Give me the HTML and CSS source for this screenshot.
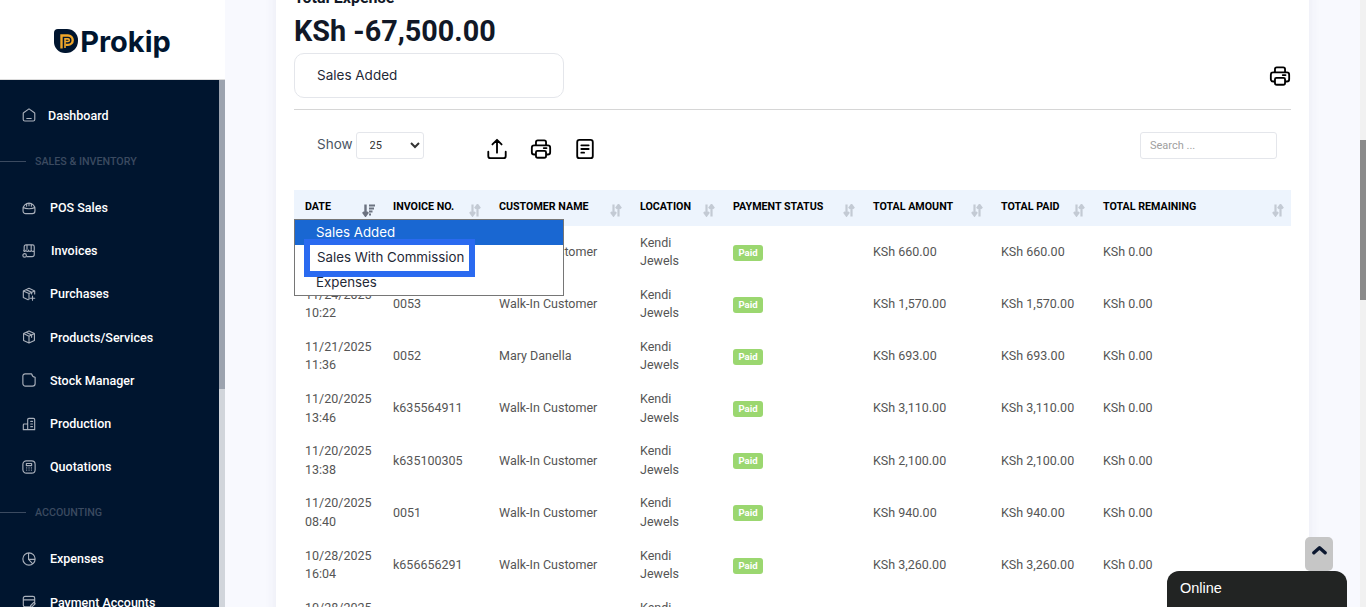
FILE: index.html
```html
<!DOCTYPE html>
<html>
    <head>
        <meta charset="utf-8">
        <title>Prokip - Sales</title>
        <link rel="stylesheet" href="styles.css">
    </head>
    <body>
        <svg class="defs" width="0" height="0">
            <symbol id="sort" viewBox="0 0 12 13">
                <path d="M3.500 0.500v10M1 8l2.500 3.500L6 8M8.500 12.500V2M6 4.500L8.500 1l2.500 3.500" fill="none" stroke="currentColor" stroke-width="2.200"/>
            </symbol>
            <symbol id="sort-down" viewBox="0 0 13 13">
                <path d="M3.500 0.500v10M1 8l2.500 3.500L6 8" fill="none" stroke="currentColor" stroke-width="2.400"/>
                <path d="M7 1.500h6M7 4.500h5M7 7.500h3.500M7 10.500h2" fill="none" stroke="currentColor" stroke-width="2"/>
            </symbol>
            <symbol id="printer" viewBox="0 0 24 24">
                <path d="M6.500 8V4.500A2 2 0 0 1 8.500 2.500h7a2 2 0 0 1 2 2V8M6.500 18H4.500a2.500 2.500 0 0 1-2.500-2.500v-5A2.500 2.500 0 0 1 4.500 8h15a2.500 2.500 0 0 1 2.500 2.500v5a2.500 2.500 0 0 1-2.500 2.500h-2M8 14h8a1.500 1.500 0 0 1 1.500 1.500v4a2 2 0 0 1-2 2h-7a2 2 0 0 1-2-2v-4A1.500 1.500 0 0 1 8 14zM15 11h3" fill="none" stroke="currentColor" stroke-width="2" stroke-linecap="round"/>
            </symbol>
        </svg>
        <div class="shell">
            <aside class="sidebar">
                <div class="brand">
                    <svg class="brand-mark" viewBox="0 0 24 24">
                        <path d="M4 0h9a11 11 0 0 1 11 11v1a12 12 0 0 1-12 12h-1A11 11 0 0 1 0 13V4a4 4 0 0 1 4-4z" fill="#00152f"/>
                        <path d="M7.500 19.500V6.500h6.500a4.700 4.700 0 0 1 0 9.400h-2.500" fill="none" stroke="#f0a72a" stroke-width="2.400"/>
                        <path d="M11.500 12.500h2.500a1.300 1.300 0 0 0 0-2.600h-3v9" fill="none" stroke="#f0a72a" stroke-width="1.600"/>
                    </svg>
                    <span class="brand-name">Prokip</span>
                </div>
                <div class="nav-wrap">
                    <nav class="nav">
                        <a class="nav-item first">
                            <svg class="nav-icon" viewBox="0 0 16 16"><path d="M8 1L1.800 5.500a1 1 0 0 0-.4.800v6.700a1.800 1.800 0 0 0 1.800 1.800h9.600a1.800 1.800 0 0 0 1.800-1.800V6.300a1 1 0 0 0-.4-.8zM5.500 12h5"/></svg>
                            Dashboard
                        </a>
                        <div class="nav-section"><span class="rule"></span>SALES &amp; INVENTORY</div>
                        <a class="nav-item">
                            <svg class="nav-icon" viewBox="0 0 16 16"><path d="M1.200 9A6.800 6.500 0 0 1 14.800 9v2.500a3 3 0 0 1-3 3H4.200a3 3 0 0 1-3-3zM1.500 7.500c2.500 1.800 10.500 1.800 13 0M5.300 4v2M8 3v2.500M10.700 4v2"/></svg>
                            POS Sales
                        </a>
                        <a class="nav-item">
                            <svg class="nav-icon" viewBox="0 0 16 16"><path d="M2.500 7V3a2 2 0 0 1 2-2h7.500a2 2 0 0 1 2 2v4c0 2-3 2-3.500 0 0 2-3 2-3 0 0 2-3 2-3 0-.5 2-2.500 2-2.500 0zM5.700 1.500V6M10.500 1.500V6M14 8v4a2.500 2.500 0 0 1-2.500 2.500H6M1 13a2 2 0 1 0 4 0a2 2 0 1 0-4 0"/></svg>
                            <span class="shift">Invoices</span>
                        </a>
                        <a class="nav-item">
                            <svg class="nav-icon" viewBox="0 0 16 16"><path d="M7 14.500L1.500 12V4.500L8 1.500l6.500 3V8M1.500 4.500L8 7.500l6.500-3M8 7.500V14M4.500 3l6.500 3v2M12 10.500v4.500M9.500 12.800h5"/></svg>
                            Purchases
                        </a>
                        <a class="nav-item">
                            <svg class="nav-icon" viewBox="0 0 16 16"><path d="M8 1.200l6.200 2.900v7.800L8 14.800l-6.200-2.900V4.100zM1.800 4.100L8 7.200l6.200-3.100M8 7.200v7.600M4.800 2.700L11 5.800v2.600"/></svg>
                            Products/Services
                        </a>
                        <a class="nav-item">
                            <svg class="nav-icon" viewBox="0 0 16 16"><path d="M3.500 1h7.500c.5 2.500 1.500 3.500 4 3.800v7.200a3 3 0 0 1-3 3H4a3 3 0 0 1-3-3V3.500A2.500 2.500 0 0 1 3.500 1z"/></svg>
                            Stock Manager
                        </a>
                        <a class="nav-item">
                            <svg class="nav-icon" viewBox="0 0 16 16"><path d="M6.500 14.500V3a1.500 1.500 0 0 1 1.500-1.500h5A1.500 1.500 0 0 1 14.500 3v11.500zM6.500 8H2.500a1 1 0 0 0-1 1v5.500h5M10 5h2M10 8h2M10 11h2"/></svg>
                            Production
                        </a>
                        <a class="nav-item">
                            <svg class="nav-icon" viewBox="0 0 16 16"><path d="M5 1h6a4 4 0 0 1 4 4v6a4 4 0 0 1-4 4H5a4 4 0 0 1-4-4V5a4 4 0 0 1 4-4zM5 4h6v2.500H5zM5.300 9h.1M8 9h.1M10.700 9h.1M5.300 11.500h.1M8 11.500h.1M10.700 11.500h.1"/></svg>
                            Quotations
                        </a>
                        <div class="nav-section"><span class="rule"></span>ACCOUNTING</div>
                        <a class="nav-item">
                            <svg class="nav-icon" viewBox="0 0 16 16"><path d="M1 8a7 7 0 1 0 14 0a7 7 0 1 0-14 0M7.500 1.500V8.500h7M7.500 8.500l4.500 4.700"/></svg>
                            Expenses
                        </a>
                        <a class="nav-item">
                            <svg class="nav-icon" viewBox="0 0 16 16"><path d="M9 13.500H3.500a2 2 0 0 1-2-2v-8a2 2 0 0 1 2-2h9a2 2 0 0 1 2 2v5M1.500 5.500h13M9.500 14l.5-2 3.500-3.500 1.500 1.500-3.500 3.500z"/></svg>
                            Payment Accounts
                        </a>
                    </nav>
                    <div class="nav-scroll"><div class="nav-thumb"></div></div>
                </div>
            </aside>

            <main class="main">
                <section class="card">
                    <h4 class="total-label">Total Expense</h4>
                    <h2 class="total-value">KSh -67,500.00</h2>
                    <div class="filter-row">
                        <div class="filter-box">Sales Added</div>
                        <svg class="icon-btn"><use href="#printer"/></svg>
                    </div>
                    <hr class="divider">
                    <div class="toolbar">
                        <label class="show-label">Show</label>
                        <select class="show-select"><option>25</option><option>50</option><option>100</option></select>
                        <div class="tools">
                            <svg class="icon-btn" viewBox="0 0 24 24"><path d="M12 16V2.500M7 7l5-5 5 5M2.500 15v4.500A2.500 2.500 0 0 0 5 22h14a2.500 2.500 0 0 0 2.500-2.500V15" fill="none" stroke="currentColor" stroke-width="2" stroke-linecap="round" stroke-linejoin="round"/></svg>
                            <svg class="icon-btn"><use href="#printer"/></svg>
                            <svg class="icon-btn" viewBox="0 0 24 24"><path d="M6 2h12a2.500 2.500 0 0 1 2.500 2.500v15A2.500 2.500 0 0 1 18 22H6a2.500 2.500 0 0 1-2.500-2.500v-15A2.500 2.500 0 0 1 6 2zM8 8h8M8 12h8M8 16h3" fill="none" stroke="currentColor" stroke-width="2" stroke-linecap="round"/></svg>
                        </div>
                        <input class="search" placeholder="Search ...">
                    </div>
                    <div class="table-wrap">
                        <table class="sales">
                            <colgroup>
                                <col class="c-date"><col class="c-inv"><col class="c-cust"><col class="c-loc"><col class="c-status"><col class="c-amount"><col class="c-paid"><col class="c-rem">
                            </colgroup>
                            <thead>
                                <tr>
                                    <th><div class="th-in">DATE<svg class="sort active"><use href="#sort-down"/></svg></div></th>
                                    <th><div class="th-in">INVOICE NO.<svg class="sort"><use href="#sort"/></svg></div></th>
                                    <th><div class="th-in">CUSTOMER NAME<svg class="sort"><use href="#sort"/></svg></div></th>
                                    <th><div class="th-in">LOCATION<svg class="sort"><use href="#sort"/></svg></div></th>
                                    <th><div class="th-in">PAYMENT STATUS<svg class="sort"><use href="#sort"/></svg></div></th>
                                    <th><div class="th-in">TOTAL AMOUNT<svg class="sort"><use href="#sort"/></svg></div></th>
                                    <th><div class="th-in">TOTAL PAID<svg class="sort"><use href="#sort"/></svg></div></th>
                                    <th><div class="th-in">TOTAL REMAINING<svg class="sort"><use href="#sort"/></svg></div></th>
                                </tr>
                            </thead>
                            <tbody>
                                <tr><td>11/24/2025<br>12:05</td><td>0054</td><td>Walk-In Customer</td><td>Kendi<br>Jewels</td><td><span class="paid">Paid</span></td><td>KSh 660.00</td><td>KSh 660.00</td><td>KSh 0.00</td></tr>
                                <tr><td>11/24/2025<br>10:22</td><td>0053</td><td>Walk-In Customer</td><td>Kendi<br>Jewels</td><td><span class="paid">Paid</span></td><td>KSh 1,570.00</td><td>KSh 1,570.00</td><td>KSh 0.00</td></tr>
                                <tr><td>11/21/2025<br>11:36</td><td>0052</td><td>Mary Danella</td><td>Kendi<br>Jewels</td><td><span class="paid">Paid</span></td><td>KSh 693.00</td><td>KSh 693.00</td><td>KSh 0.00</td></tr>
                                <tr><td>11/20/2025<br>13:46</td><td>k635564911</td><td>Walk-In Customer</td><td>Kendi<br>Jewels</td><td><span class="paid">Paid</span></td><td>KSh 3,110.00</td><td>KSh 3,110.00</td><td>KSh 0.00</td></tr>
                                <tr><td>11/20/2025<br>13:38</td><td>k635100305</td><td>Walk-In Customer</td><td>Kendi<br>Jewels</td><td><span class="paid">Paid</span></td><td>KSh 2,100.00</td><td>KSh 2,100.00</td><td>KSh 0.00</td></tr>
                                <tr><td>11/20/2025<br>08:40</td><td>0051</td><td>Walk-In Customer</td><td>Kendi<br>Jewels</td><td><span class="paid">Paid</span></td><td>KSh 940.00</td><td>KSh 940.00</td><td>KSh 0.00</td></tr>
                                <tr><td>10/28/2025<br>16:04</td><td>k656656291</td><td>Walk-In Customer</td><td>Kendi<br>Jewels</td><td><span class="paid">Paid</span></td><td>KSh 3,260.00</td><td>KSh 3,260.00</td><td>KSh 0.00</td></tr>
                                <tr><td>10/28/2025<br>12:10</td><td>0050</td><td>Walk-In Customer</td><td>Kendi<br>Jewels</td><td><span class="paid">Paid</span></td><td>KSh 1,200.00</td><td>KSh 1,200.00</td><td>KSh 0.00</td></tr>
                            </tbody>
                        </table>
                        <ul class="dropdown">
                            <li class="opt selected">Sales Added</li>
                            <li class="opt focused">Sales With Commission</li>
                            <li class="opt">Expenses</li>
                        </ul>
                    </div>
                </section>
            </main>
            <div class="page-scroll"><div class="page-thumb"></div></div>
        </div>
        <div class="to-top"><svg viewBox="0 0 16 10"><path d="M2 8l6-5.500L14 8" fill="none" stroke="#0c1830" stroke-width="3.600" stroke-linecap="round" stroke-linejoin="round"/></svg></div>
        <div class="chat">Online</div>
    </body>
</html>
```
FILE: styles.css
```css
html, body {
    margin: 0;
    height: 100%;
    overflow: hidden;
}
body {
    font-family: "Roboto", "Liberation Sans", sans-serif;
    background-color: #f8f9fe;
}
.defs {
    display: block;
    height: 0;
}
.shell {
    display: flex;
    height: 607px;
    overflow: hidden;
}

/* sidebar */
.sidebar {
    width: 225px;
    flex: none;
    display: flex;
    flex-direction: column;
    background-color: white;
}
.brand {
    height: 76px;
    padding-top: 3px;
    border-bottom: 1px solid #dcdcdc;
    display: flex;
    align-items: center;
    justify-content: center;
    gap: 2px;
}
.brand-mark {
    width: 24px;
    height: 24px;
}
.brand-name {
    font-family: "Inter", "Liberation Sans", sans-serif;
    font-weight: 700;
    font-size: 29px;
    color: #00152f;
}
.nav-wrap {
    flex: 1;
    display: flex;
    min-height: 0;
}
.nav {
    flex: 1;
    background-color: #00152f;
    padding-top: 13.800px;
    overflow: hidden;
}
.nav-scroll {
    width: 6px;
    background-color: #d1d5db;
}
.nav-thumb {
    height: 309px;
    background-color: #9ca3af;
}
.nav-item {
    display: flex;
    align-items: center;
    height: 43.200px;
    padding-left: 22px;
    gap: 14px;
    color: white;
    font-size: 12.500px;
    font-weight: 500;
    white-space: nowrap;
}
.nav-item.first {
    gap: 12px;
}
.nav-icon {
    width: 14px;
    height: 14px;
    flex: none;
    fill: none;
    stroke: #a9b0bb;
    stroke-width: 1.300;
    stroke-linecap: round;
    stroke-linejoin: round;
}
.shift {
    margin-left: 1px;
}
.nav-section {
    display: flex;
    align-items: center;
    height: 49px;
    gap: 9px;
    font-size: 10.700px;
    font-weight: 500;
    color: #3b4a60;
}
.rule {
    display: block;
    width: 26px;
    height: 1px;
    background-color: #3b4a60;
}

/* main card */
.main {
    flex: 1;
    padding: 0 51px;
    min-width: 0;
}
.card {
    margin-top: -14px;
    height: 700px;
    padding: 0 18px;
    background-color: white;
    box-shadow: 0 0 12px rgba(60, 70, 110, 0.08);
}
.total-label {
    margin: 0;
    height: 22px;
    font-family: "Roboto", "Liberation Sans", sans-serif;
    font-size: 16px;
    font-weight: 700;
    line-height: 23px;
    color: #111827;
}
.total-value {
    margin: 0;
    height: 45px;
    font-family: "Roboto", "Liberation Sans", sans-serif;
    font-size: 28.800px;
    font-weight: 700;
    line-height: 46px;
    color: #111827;
}
.filter-row {
    display: flex;
    justify-content: space-between;
    align-items: center;
}
.filter-box {
    width: 246px;
    height: 43px;
    padding-left: 22px;
    border: 1px solid #e4e6eb;
    border-radius: 10px;
    font-family: "Inter", "Liberation Sans", sans-serif;
    font-size: 13.500px;
    line-height: 43px;
    color: #1f2937;
}
.icon-btn {
    width: 22px;
    height: 22px;
    color: black;
}
.divider {
    margin: 11px 0 0;
    border: 0;
    border-top: 1px solid #d6d6d6;
}
.toolbar {
    display: flex;
    align-items: center;
    margin-top: 22px;
    padding: 0 14px 0 23px;
    height: 27px;
}
.show-label {
    font-family: "Inter", "Liberation Sans", sans-serif;
    font-size: 13.500px;
    color: #4b5563;
    margin-right: 3px;
    padding-bottom: 3px;
}
.show-select {
    width: 68px;
    height: 27px;
    padding-left: 9px;
    border: 1px solid #e4e6eb;
    border-radius: 3px;
    background-color: white;
    font-family: "Roboto", sans-serif;
    font-size: 11px;
    color: #333;
}
.tools {
    display: flex;
    gap: 22px;
    margin-left: 62px;
    flex: 1;
    padding-top: 6px;
}
.search {
    box-sizing: border-box;
    width: 137px;
    height: 27px;
    padding: 0 9px;
    border: 1px solid #e4e6eb;
    border-radius: 3px;
    font-family: "Roboto", sans-serif;
    font-size: 11px;
}
.search::placeholder {
    color: #a0a0a0;
}

/* table */
.table-wrap {
    position: relative;
    margin-top: 31px;
}
.sales {
    width: 997px;
    border-collapse: collapse;
    table-layout: fixed;
    font-size: 12.500px;
    color: #555;
}
.c-date { width: 88px; }
.c-inv { width: 106px; }
.c-cust { width: 141px; }
.c-loc { width: 93px; }
.c-status { width: 140px; }
.c-amount { width: 128px; }
.c-paid { width: 102px; }
.c-rem { width: 199px; }
.sales th {
    height: 36px;
    padding: 0 7px 0 11px;
    background-color: #edf4fd;
    vertical-align: top;
    text-align: left;
    font-size: 10.700px;
    font-weight: 700;
    color: black;
}
.th-in {
    display: flex;
    justify-content: space-between;
    white-space: nowrap;
    padding-top: 10px;
}
.sort {
    width: 12px;
    height: 13px;
    margin-top: 4px;
    flex: none;
    color: #c3cad4;
}
.sort.active {
    color: #6b7280;
    width: 13px;
}
.sales td {
    height: 52.200px;
    box-sizing: border-box;
    padding: 0 11px;
    line-height: 18.600px;
    vertical-align: middle;
}
.paid {
    display: inline-block;
    width: 30px;
    height: 16px;
    border-radius: 3px;
    background-color: #9bd770;
    color: white;
    font-size: 9.500px;
    font-weight: 700;
    line-height: 16px;
    text-align: center;
    vertical-align: middle;
}

/* open select list, lies over the table */
.dropdown {
    position: absolute;
    left: 0;
    top: 29px;
    width: 268px;
    height: 75px;
    margin: 0;
    padding: 0;
    list-style: none;
    border: 1px solid #767676;
    background-color: white;
    font-family: "Inter", "Liberation Sans", sans-serif;
    font-size: 13.300px;
    color: #1f2937;
}
.opt {
    height: 25px;
    line-height: 24px;
    padding-left: 21px;
}
.opt.selected {
    background-color: #1967d2;
    color: white;
}
.opt.focused {
    position: absolute;
    left: 9px;
    top: 19px;
    width: 152px;
    height: 26px;
    padding-left: 7px;
    line-height: 24px;
    background-color: white;
    border: 6px solid #2a6af0;
    white-space: nowrap;
}
.opt.focused + .opt {
    margin-top: 25px;
}

/* page scrollbar */
.page-scroll {
    width: 6px;
    flex: none;
    background-color: #f1f1f1;
}
.page-thumb {
    height: 160px;
    margin-top: 140px;
    background-color: #8a8a8a;
}

/* floating */
.to-top {
    position: fixed;
    left: 1305px;
    top: 537px;
    width: 28px;
    height: 34px;
    border-radius: 5px;
    background-color: #c6c6c6;
    display: flex;
    justify-content: center;
    padding-top: 8px;
    box-sizing: border-box;
}
.to-top svg {
    width: 15px;
    height: 10px;
}
.chat {
    position: fixed;
    left: 1167px;
    top: 571px;
    width: 167px;
    height: 36px;
    padding-left: 13px;
    border-radius: 12px 12px 0 0;
    background-color: #222423;
    color: white;
    font-family: "Liberation Sans", sans-serif;
    font-size: 14.500px;
    line-height: 34px;
}
```
